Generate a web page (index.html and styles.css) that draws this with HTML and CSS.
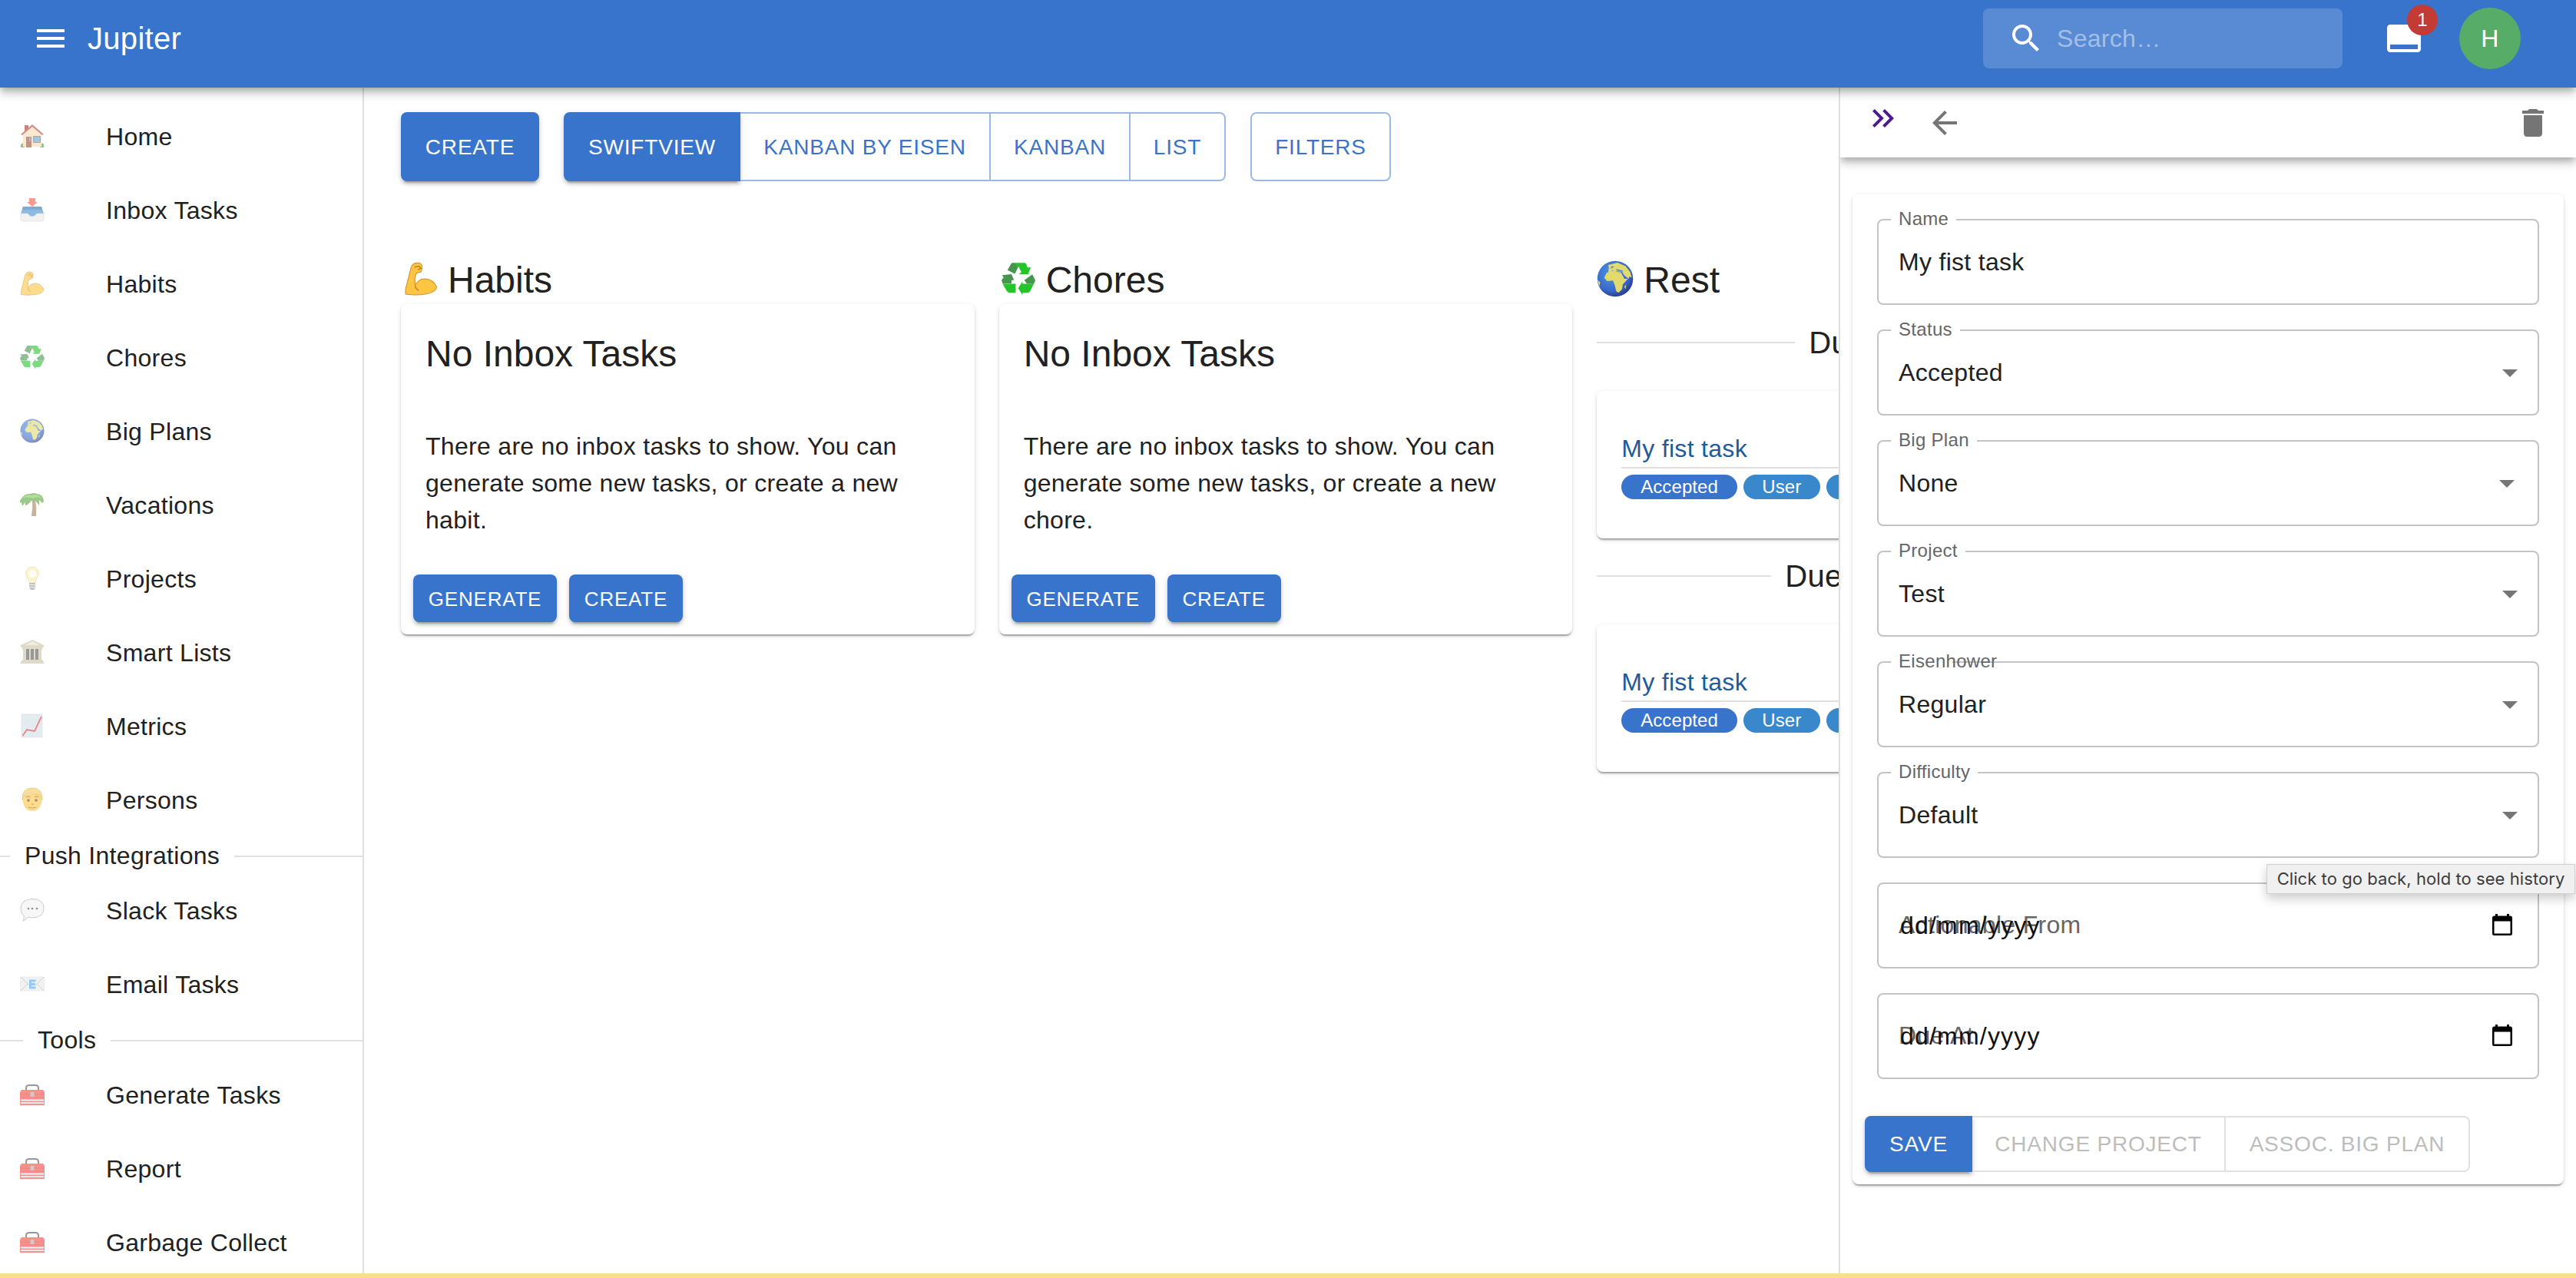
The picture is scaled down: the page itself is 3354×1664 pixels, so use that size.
FILE: index.html
```
<!DOCTYPE html>
<html lang="en">
<head>
<meta charset="utf-8">
<title>Jupiter</title>
<link rel="stylesheet" href="styles.css">
</head>
<body>
<svg class="defs" aria-hidden="true">
  <symbol id="home" viewBox="0 0 32 32"><path fill="#5c9a3c" d="M1 27q3-3 5 0v4H1zM26 27q4-3 5 0v4h-5z"/><path fill="#a8322c" d="M6 2h5v8H6z"/><path fill="#f6dcb4" d="M4 13 16 3l12 10v17H4z"/><path fill="#b5483f" d="M1 14 16 1l15 13-2 1L16 4 3 15z"/><path fill="#9a4d2c" d="M8 17h7v14H8z"/><path fill="#5aa5d8" d="M12 18h2v5h-2zM18 17h8v7h-8z"/><path fill="none" stroke="#8b6a50" d="M17.500 16.500h9v8h-9z"/></symbol>
  <symbol id="inbox" viewBox="0 0 32 32"><path fill="#ff5449" d="M12 1h8v5h3l-7 6-7-6h3z"/><path fill="#3f8fd0" d="M4 12h24l3 9-3 6H4l-3-6z"/><path fill="#2c73ad" d="M4 12h24l1 4H3z"/><path fill="#eceae8" stroke="#c9c7c5" stroke-width=".6" d="M1 21h9q3 4 6 4t6-4h9v8q0 2-2 2H3q-2 0-2-2z"/></symbol>
  <symbol id="arm" viewBox="0 0 32 32"><path fill="#fdc541" stroke="#d4912a" stroke-width=".8" d="M1.500 30.500Q1 26 3 20L6.500 6Q8 1 12 1q4-.5 5 2.500.5 3-1 6l-4 1q-2.500 4-1.500 9v3.500Q13 16 20 16q8 .5 11 8-1 5-11 6.500-9 1.500-18.500 0z"/><path fill="none" stroke="#b87518" stroke-width=".9" d="M10 5l4-1 2 2-3 1.500M10.500 23q1 3 3.500 4"/></symbol>
  <symbol id="recycle" viewBox="0 0 32 32"><path fill="#24c52b" d="M9.400.9H22q1 0 1.500 1.500l1.200 3 3.100-.5-2.600 6.800h-8.700l2.300-2.100L16 4.300zM1 20.700h12.400v8.500H7.500q-1.500 0-2.500-1.500zM31.500 19l-4.300 8.500q-.7 1.600-2.500 1.600L20 29.200l-.2 2.100-4-6.400 4-6.600v2.400h10.100z"/><path fill="#46964e" d="M9.400 1.200Q12 .5 13.500 2.500L16 4.300l-3.300 7-7.100-3.500zM.5 12.500l8.900-.8 2.400 5.300-2.400.5v3H1L0 17.200l2-2.500zM21.600 17.200l7.600-5.400 2.800 5.600-1.500 3.300H24z"/></symbol>
  <symbol id="globe" viewBox="0 0 32 32"><radialGradient id="sea" cx=".4" cy=".35" r=".7"><stop offset="0" stop-color="#4e97e6"/><stop offset=".7" stop-color="#3768c8"/><stop offset="1" stop-color="#25367f"/></radialGradient><circle cx="16" cy="16" r="15.500" fill="url(#sea)"/><path fill="#e2da6c" d="M10 4 18 2l7 3 4 5 1.500 5-2-1-1 2-3.500-3-2-3-4-.5-3 .5-1-1.500-4 2 .5-4zM8.500 11l4-2 4.500 1 4 .5 3 5.500h3l-4.500 5-.5 4-3 3-2-1-1.500-6-1.500-3.500-5 .5-2.500-3zM.600 17l2.400 2-.8 3.500zM24 23l1.500-2-.5 4z"/><path fill="#4d86d3" d="M13 5l2 .5-3 2zM17 7.500l6 1.500-1 1-5-1.300z"/></symbol>
  <symbol id="palm" viewBox="0 0 32 32"><path fill="#a5805a" d="m16 10 4 0q2 10 1 21h-6q2-11 1-21z"/><path fill="#5aa53f" d="M2 8Q6 1 14 2q4-2 8 0 8 0 9 10l-2 2-4-4 0 7-5-6-5 0-5 5-3 1v-4l-4 5-1-5-2 1q-1-3 2-6z"/><path fill="#83c858" d="M3 8Q8 2 15 4q7-3 14 4-7-3-12 0-6-3-14 0z"/></symbol>
  <symbol id="bulb" viewBox="0 0 32 32"><path fill="#ffedb0" stroke="#e8cd85" stroke-width=".8" d="M12 22q-.5-4-2.500-7Q6 9 9 5q2.500-4 7-4t7 4q3 4-.5 10-2 3-2.500 7z"/><circle cx="16" cy="10" r="5" fill="#fffbe8"/><path fill="#999" d="M12 22h8v6l-2 3h-4l-2-3z"/><path stroke="#eee" d="M12 24.500h8M12 27.500h8"/></symbol>
  <symbol id="bank" viewBox="0 0 32 32"><path fill="#c9c3a8" d="M1 7 16 0l15 7v3H1zM3 10h26v3H3zM4 13h4v13H4zM12 13h2v13h-2zM18 13h2v13h-2zM24 13h4v13h-4zM3 26h26l3 5H0z"/><path fill="#555" d="M8 12h4v14H8zM14 12h4v14h-4zM20 12h4v14h-4z"/><path fill="#e8e3cc" d="m6 7 10-5 10 5z"/></symbol>
  <symbol id="chart" viewBox="0 0 32 32"><path fill="#d5e0e9" stroke="#c0cbd4" stroke-width=".6" d="M2 1h27v30H2z"/><path stroke="#c8d3dc" stroke-width=".4" d="M2 8h27M2 16h27M2 24h27M9 1v30M16 1v30M23 1v30"/><path fill="none" stroke="#e5343a" stroke-width="1.800" d="m3.500 29 5.500-8 10 2 9-19"/></symbol>
  <symbol id="person" viewBox="0 0 32 32"><path fill="#fbc443" d="M4 9h24v10q-2 12-12 12T4 19z"/><path fill="#f4cb58" stroke="#d7a02f" stroke-width=".7" d="M3 17Q2 1 16 1t13 16l-3-7q-8-1-13-2-6 0-7 3z"/><g fill="#5b3d1e"><circle cx="11" cy="17" r="1.700"/><circle cx="21" cy="17" r="1.700"/></g><path fill="none" stroke="#a35e1d" stroke-width="1.200" d="M8 13q3-2 5 0M19 13q3-2 5 0M11 26q5 2 10 0M15 22h3"/></symbol>
  <symbol id="bubble" viewBox="0 0 32 32"><path fill="#f3f3f3" stroke="#aaa" d="M16 1.500q15 0 15 12T16 26q-3 0-6-1-2 4-6 5 2-3 1-7-4-3-4-9Q1 2 16 1.500z"/><g fill="#444"><circle cx="11" cy="14" r="1.300"/><circle cx="16" cy="14" r="1.300"/><circle cx="22" cy="14" r="1.300"/></g></symbol>
  <symbol id="mail" viewBox="0 0 32 32"><path fill="#e9e9e9" stroke="#ccc" stroke-width=".5" d="M.500 7h31v18H.500z"/><path fill="none" stroke="#b5b5b5" d="m1 7 11 11M31 7 20 18M1 25l9-9M31 25l-9-9"/><path fill="none" stroke="#51a4f5" stroke-width="3" d="M20.500 12h-7v9h7M13 16.500h7"/></symbol>
  <symbol id="toolbox" viewBox="0 0 32 32"><path fill="none" stroke="#555" stroke-width="2" d="M8 11V8q0-4 4-4h8q4 0 4 4v3"/><path fill="#f9483f" d="M2 10h28l2 3v17H0V13z"/><path stroke="#b73530" stroke-width=".6" d="M0 16h32M0 20h32"/><path stroke="#d7e8ee" stroke-width="1.800" d="M1 23.500h30M1 27h30"/><path fill="#a9a9a9" d="M13.500 13h5v6h-5z"/></symbol>
  <symbol id="drop" viewBox="0 0 24 24"><path d="m7 10 5 5 5-5z"/></symbol>
  <symbol id="cal" viewBox="0 0 26 28"><path d="M4 0h3v2.500h12V0h3v2.500h1.500Q26 2.500 26 5v20.500Q26 28 23.500 28h-21Q0 28 0 25.500V5Q0 2.500 2.500 2.500H4zM2.500 9.500v16h21v-16z"/></symbol>
</svg>

<div class="app">
  <header class="topbar">
    <svg class="icon" viewBox="0 0 24 24"><path d="M3 18h18v-2H3v2zm0-5h18v-2H3v2zm0-7v2h18V6H3z"/></svg>
    <div class="brand">Jupiter</div>
    <div class="search">
      <svg class="icon" viewBox="0 0 24 24"><path d="M15.500 14h-.79l-.28-.27C15.410 12.590 16 11.110 16 9.500 16 5.910 13.090 3 9.500 3S3 5.910 3 9.500 5.910 16 9.500 16c1.610 0 3.090-.59 4.230-1.570l.27.28v.79l5 4.990L20.490 19l-4.990-5zm-6 0C7.010 14 5 11.990 5 9.500S7.010 5 9.500 5 14 7.010 14 9.500 11.990 14 9.500 14z"/></svg>
      <span>Search…</span>
    </div>
    <div class="notify">
      <svg class="icon" viewBox="0 0 24 24"><path d="M21 3H3c-1.100 0-2 .9-2 2v14c0 1.100.9 2 2 2h18c1.100 0 2-.9 2-2V5c0-1.100-.9-2-2-2zm0 16H3v-3h18v3z"/></svg>
      <span class="badge">1</span>
    </div>
    <div class="avatar">H</div>
  </header>

  <div class="body">
    <nav class="sidebar">
      <a class="item"><svg><use href="#home"/></svg>Home</a>
      <a class="item"><svg><use href="#inbox"/></svg>Inbox Tasks</a>
      <a class="item"><svg><use href="#arm"/></svg>Habits</a>
      <a class="item"><svg><use href="#recycle"/></svg>Chores</a>
      <a class="item"><svg><use href="#globe"/></svg>Big Plans</a>
      <a class="item"><svg><use href="#palm"/></svg>Vacations</a>
      <a class="item"><svg><use href="#bulb"/></svg>Projects</a>
      <a class="item"><svg><use href="#bank"/></svg>Smart Lists</a>
      <a class="item"><svg><use href="#chart"/></svg>Metrics</a>
      <a class="item"><svg><use href="#person"/></svg>Persons</a>
      <div class="divider divider-push">Push Integrations</div>
      <a class="item"><svg><use href="#bubble"/></svg>Slack Tasks</a>
      <a class="item"><svg><use href="#mail"/></svg>Email Tasks</a>
      <div class="divider divider-tools">Tools</div>
      <a class="item"><svg><use href="#toolbox"/></svg>Generate Tasks</a>
      <a class="item"><svg><use href="#toolbox"/></svg>Report</a>
      <a class="item"><svg><use href="#toolbox"/></svg>Garbage Collect</a>
    </nav>

    <main class="main">
      <div class="toolbar">
        <button class="btn solid w-create">Create</button>
        <div class="group">
          <button class="btn solid w-swift">SwiftView</button>
          <button class="btn outline w-eisen">Kanban by Eisen</button>
          <button class="btn outline w-kanban">Kanban</button>
          <button class="btn outline w-list">List</button>
        </div>
        <button class="btn outline w-filters">Filters</button>
      </div>
      <div class="columns">
        <section class="column">
          <h2><svg class="em-arm"><use href="#arm"/></svg>Habits</h2>
          <div class="card">
            <h3>No Inbox Tasks</h3>
            <p>There are no inbox tasks to show. You can<br>generate some new tasks, or create a new<br>habit.</p>
            <div class="actions"><button class="btn small solid w-gen">Generate</button><button class="btn small solid w-new">Create</button></div>
          </div>
        </section>
        <section class="column">
          <h2><svg class="em-recycle"><use href="#recycle"/></svg>Chores</h2>
          <div class="card">
            <h3>No Inbox Tasks</h3>
            <p>There are no inbox tasks to show. You can<br>generate some new tasks, or create a new<br>chore.</p>
            <div class="actions"><button class="btn small solid w-gen">Generate</button><button class="btn small solid w-new">Create</button></div>
          </div>
        </section>
        <section class="column">
          <h2><svg class="em-globe"><use href="#globe"/></svg>Rest</h2>
          <div class="due due-first">Due Today</div>
          <div class="card task">
            <div class="task-name">My fist task</div>
            <div class="chips"><span class="chip chip-status">Accepted</span><span class="chip chip-source">User</span><span class="chip"></span></div>
          </div>
          <div class="due due-second">Due This Week</div>
          <div class="card task">
            <div class="task-name">My fist task</div>
            <div class="chips"><span class="chip chip-status">Accepted</span><span class="chip chip-source">User</span><span class="chip"></span></div>
          </div>
        </section>
      </div>
    </main>

    <aside class="panel">
      <div class="panel-bar">
        <svg class="icon hide" viewBox="0 0 24 24"><path d="M6.410 6 5 7.410 9.580 12 5 16.590 6.410 18l6-6z"/><path d="m13 6-1.410 1.410L16.170 12l-4.580 4.590L13 18l6-6z"/></svg>
        <svg class="icon back" viewBox="0 0 24 24"><path d="M20 11H7.830l5.590-5.590L12 4l-8 8 8 8 1.410-1.410L7.830 13H20v-2z"/></svg>
        <svg class="icon trash" viewBox="0 0 24 24"><path d="M6 19c0 1.100.9 2 2 2h8c1.100 0 2-.9 2-2V7H6v12zM19 4h-3.500l-1-1h-5l-1 1H5v2h14V4z"/></svg>
      </div>
      <div class="form">
        <div class="field"><i class="notch n-name"></i><label>Name</label>My fist task</div>
        <div class="field"><i class="notch n-status"></i><label>Status</label>Accepted<svg><use href="#drop"/></svg></div>
        <div class="field plan"><i class="notch n-plan"></i><label>Big Plan</label>None<svg><use href="#drop"/></svg></div>
        <div class="field"><i class="notch n-project"></i><label>Project</label>Test<svg><use href="#drop"/></svg></div>
        <div class="field"><i class="notch n-eisen"></i><label>Eisenhower</label>Regular<svg><use href="#drop"/></svg></div>
        <div class="field"><i class="notch n-diff"></i><label>Difficulty</label>Default<svg><use href="#drop"/></svg></div>
        <div class="field date"><label>Actionable From</label><span>dd/mm/yyyy</span><svg><use href="#cal"/></svg></div>
        <div class="field date"><label>Due At</label><span>dd/mm/yyyy</span><svg><use href="#cal"/></svg></div>
        <div class="group form-actions">
          <button class="btn solid w-save">Save</button>
          <button class="btn disabled w-change">Change Project</button>
          <button class="btn disabled w-assoc">Assoc. Big Plan</button>
        </div>
      </div>
    </aside>
  </div>
  <div class="strip"></div>
  <div class="tooltip">Click to go back, hold to see history</div>
</div>
</body>
</html>
```
FILE: styles.css
```
* { box-sizing: border-box; }
body {
  margin: 0;
  background: #fff;
  color: #212121;
  font: 32px/48px "Liberation Sans", Arial, sans-serif;
  letter-spacing: .3px;
}
h2, h3, p { margin: 0; font-weight: 400; }
.defs { position: absolute; width: 0; height: 0; }
.app {
  position: relative;
  display: flex;
  flex-direction: column;
  width: 3354px;
  height: 1664px;
  overflow: hidden;
}
.icon { width: 48px; height: 48px; fill: currentColor; flex: none; }

/* Top bar */
.topbar {
  position: relative;
  z-index: 3;
  display: flex;
  align-items: center;
  flex: none;
  height: 114px;
  padding: 0 72px 14px 42px;
  background: #3874cb;
  color: #fff;
  box-shadow: 0 4px 8px -2px rgba(0,0,0,.2), 0 8px 10px rgba(0,0,0,.14), 0 2px 20px rgba(0,0,0,.12);
}
.brand { margin-left: 24px; font-size: 40px; }
.search {
  display: flex;
  align-items: center;
  width: 468px;
  height: 78px;
  margin-left: auto;
  padding-left: 32px;
  border-radius: 8px;
  background: #588bd4;
}
.search span { margin-left: 16px; color: #a3bfe7; }
.notify { position: relative; height: 48px; margin: 0 48px 0 56px; }
.badge {
  position: absolute;
  left: 28px;
  top: -20px;
  width: 40px;
  height: 40px;
  border-radius: 50%;
  background: #c23b34;
  font-size: 24px;
  line-height: 40px;
  text-align: center;
}
.avatar {
  width: 80px;
  height: 80px;
  border-radius: 50%;
  background: #57ad68;
  line-height: 80px;
  text-align: center;
}

.body { display: flex; flex: 1; min-height: 0; }

/* Sidebar */
.sidebar {
  flex: none;
  width: 474px;
  padding-top: 16px;
  border-right: 2px solid #e0e0e0;
  overflow: hidden;
}
.item { display: flex; align-items: center; height: 96px; padding-left: 26px; }
.item svg { width: 32px; height: 32px; margin: -2px 80px 0 0; opacity: .6; }
.divider { display: flex; align-items: center; gap: 19px; height: 48px; }
.divider::before, .divider::after { content: ""; height: 2px; margin-top: 2px; background: #e0e0e0; }
.divider::after { flex: 1; }
.divider-push::before { width: 13px; }
.divider-tools::before { width: 30px; }

/* Buttons */
.btn {
  height: 90px;
  padding: 1px 0 0;
  border: 0;
  border-radius: 8px;
  background: none;
  font: 28px/48px "Liberation Sans", Arial, sans-serif;
  letter-spacing: .8px;
  text-transform: uppercase;
  white-space: nowrap;
}
.solid {
  background: #3874cb;
  color: #fff;
  box-shadow: 0 6px 2px -4px rgba(0,0,0,.2), 0 4px 4px rgba(0,0,0,.14), 0 2px 10px rgba(0,0,0,.12);
}
.outline { border: 2px solid #9bb9e5; color: #3874cb; }
.disabled { border: 2px solid #e0e0e0; color: #bdbdbd; }
.small { height: 62px; font-size: 26px; }
.group { display: flex; }
.group .btn:not(:first-child) { border-top-left-radius: 0; border-bottom-left-radius: 0; border-left: 0; }
.group .btn:not(:last-child) { border-top-right-radius: 0; border-bottom-right-radius: 0; }
.w-create { width: 180px; }
.w-swift { width: 230px; }
.w-eisen { width: 326px; }
.w-kanban { width: 182px; }
.w-list { width: 124px; }
.w-filters { width: 183px; }
.w-gen { width: 187px; }
.w-new { width: 148px; }
.w-save { width: 140px; }
.w-change { width: 330px; }
.w-assoc { width: 318px; }

/* Board */
.main { flex: none; width: 1920px; padding: 32px 0 0 48px; overflow: hidden; }
.toolbar { display: flex; gap: 32px; }
.columns { display: flex; gap: 32px; margin-top: 96px; }
.column { flex: none; width: 746.67px; }
.column h2 { display: flex; align-items: center; height: 64px; padding-top: 2px; font-size: 48px; letter-spacing: 0; }
.column h2 svg { flex: none; height: 46px; margin-top: -4px; }
.column h2 .em-arm { width: 44px; margin-left: 4px; margin-right: 13px; }
.column h2 .em-recycle { width: 46px; height: 44px; margin-left: 2px; margin-right: 13px; }
.column h2 .em-globe { width: 48px; height: 48px; margin-right: 13px; }
.card {
  border-radius: 8px;
  background: #fff;
  box-shadow: 0 4px 2px -2px rgba(0,0,0,.2), 0 2px 2px rgba(0,0,0,.14), 0 2px 6px rgba(0,0,0,.12);
}
.card h3 { padding: 33px 32px 0; font-size: 48px; line-height: 64px; letter-spacing: 0; }
.card p { padding: 64px 32px 31px; white-space: nowrap; }
.actions { display: flex; gap: 16px; padding: 16px; }
.due {
  display: flex;
  align-items: center;
  gap: 18px;
  height: 48px;
  font-size: 40px;
  white-space: nowrap;
}
.due::before, .due::after { content: ""; height: 2px; background: #e0e0e0; }
.due::after { flex: 1; }
.due-first { margin: 26px 0 39px; }
.due-first::before { width: 258px; }
.due-second { margin: 25px 0 39px; }
.due-second::before { width: 227px; }
.task { height: 192px; padding: 51px 32px 0; }
.task-name { height: 50px; border-bottom: 2px solid #e0e0e0; color: #1f5a9c; }
.chips { display: flex; gap: 8px; margin-top: 8px; }
.chip {
  width: 150px;
  height: 32px;
  border-radius: 16px;
  background: #3a88cc;
  color: #fff;
  font-size: 24px;
  line-height: 32px;
  letter-spacing: .1px;
  text-align: center;
}
.chip-status { width: 150.500px; background: #3874cb; }
.chip-source { width: 100px; }

/* Detail panel */
.panel { flex: 1; border-left: 2px solid #e0e0e0; background: #fff; overflow: hidden; }
.panel-bar {
  display: flex;
  align-items: flex-start;
  height: 91px;
  padding: 22px 32px 0;
  color: #757575;
  box-shadow: 0 4px 8px -2px rgba(0,0,0,.2), 0 8px 10px rgba(0,0,0,.14), 0 2px 20px rgba(0,0,0,.12);
}
.hide { margin-top: -6px; color: #4b1a8e; }
.back { margin-left: 32px; }
.trash { margin-left: auto; }
.form {
  display: flex;
  flex-direction: column;
  gap: 32px;
  height: 1289px;
  margin: 48px 16px 0;
  padding: 32px;
  border-radius: 8px;
  box-shadow: 0 4px 2px -2px rgba(0,0,0,.2), 0 2px 2px rgba(0,0,0,.14), 0 2px 6px rgba(0,0,0,.12);
}
.field {
  position: relative;
  flex: none;
  display: flex;
  align-items: center;
  justify-content: space-between;
  height: 112px;
  padding: 0 12px 0 26px;
  border: 2px solid #c4c4c4;
  border-radius: 8px;
}
.field svg { width: 48px; height: 48px; fill: #757575; }
.plan svg { margin-right: 4px; }
.field label {
  position: absolute;
  left: 26px;
  top: -19px;
  color: #666;
  font-size: 24px;
  line-height: 34px;
}
.notch { position: absolute; left: 16px; top: -2px; height: 2px; background: #fff; }
.n-name { width: 85px; }
.n-status { width: 90px; }
.n-plan { width: 112px; }
.n-project { width: 97px; }
.n-eisen { width: 80px; }
.n-diff { width: 113px; }
.date { padding: 0 33px 0 28px; }
.date label { top: 29px; font-size: 32px; line-height: 48px; }
.date span { position: relative; color: #111; letter-spacing: 1.2px; }
.date svg { width: 26px; height: 28px; margin-top: -2px; fill: #000; }
.form-actions { margin: 16px 0 0 -16px; }
.form-actions .btn { height: 73px; }

.strip { flex: none; height: 6px; background: #f9dd90; }
.tooltip {
  position: absolute;
  z-index: 5;
  left: 2951px;
  top: 1125px;
  width: 402px;
  height: 39px;
  border: 1px solid #d0d0d0;
  background: #f0f0f0;
  color: #3c3c3c;
  font: 22px/37px Inter, sans-serif;
  letter-spacing: .07px;
  text-align: center;
  white-space: nowrap;
  box-shadow: 0 6px 14px rgba(0,0,0,.2);
}
```
